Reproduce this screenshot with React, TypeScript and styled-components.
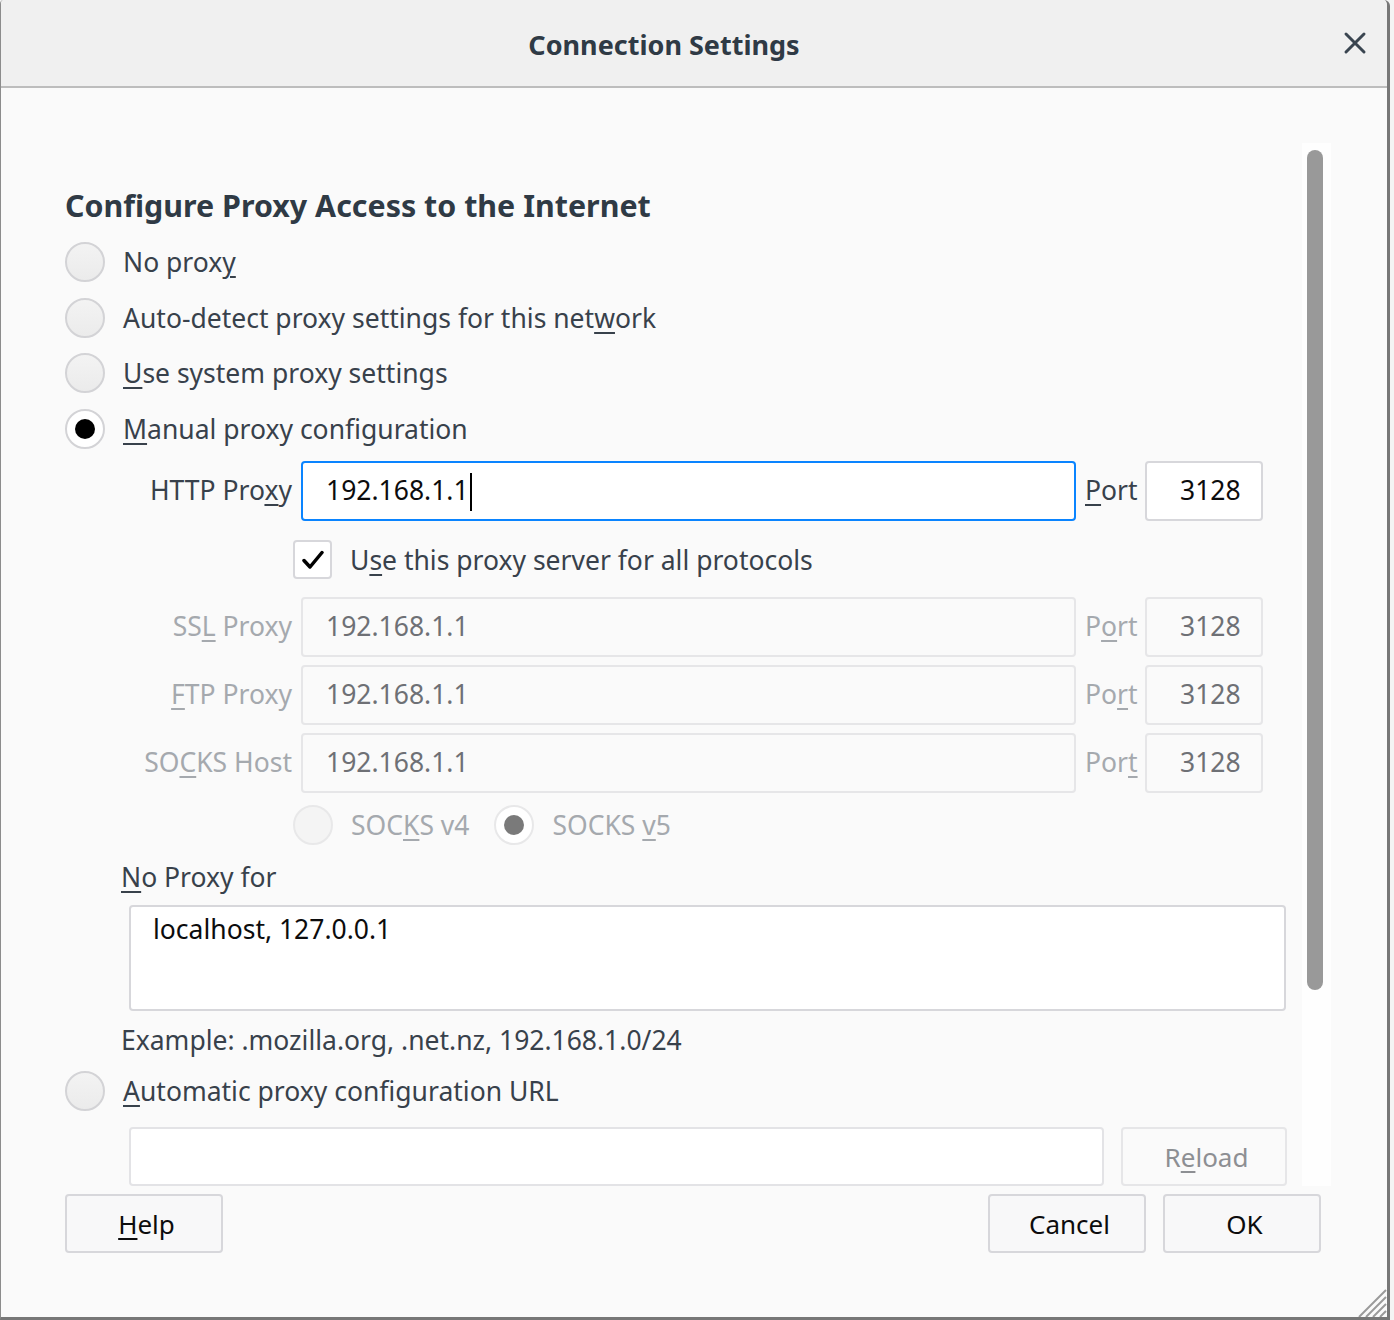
import React from "react";
import styled, { createGlobalStyle, css } from "styled-components";

const Global = createGlobalStyle`
  html, body { margin: 0; padding: 0; background: #f4f4f4; }
  body { font-family: "Noto Sans", "Open Sans", sans-serif; }
  * { box-sizing: border-box; }
`;

const TEXT = "#38414b";
const DIS = "#a5a9ae";
const FS = 26.5;

const Window = styled.div`
  position: relative;
  width: 1390px;
  height: 1320px;
  background: #fafafa;
  border-left: 1px solid #8c8c8c;
  border-right: 3px solid #777;
  border-bottom: 3px solid #777;
  border-top-right-radius: 6px;
  border-top-left-radius: 4px;
  display: flex;
  flex-direction: column;
  overflow: hidden;
`;

const Header = styled.header`
  height: 88px;
  flex: none;
  background: #f0f0f0;
  border-bottom: 2px solid #bdbdbd;
  display: flex;
  align-items: center;
`;

const Title = styled.h1`
  flex: 1;
  margin: 0;
  text-align: center;
  font-size: 27px;
  font-weight: 700;
  color: #2f3a45;
  padding-top: 2px;
`;

const CloseButton = styled.button`
  width: 56px;
  height: 56px;
  margin-right: 4px;
  border: none;
  background: transparent;
  display: flex;
  align-items: center;
  justify-content: center;
  padding: 0;
`;

const ScrollArea = styled.div`
  position: relative;
  height: 1098px;
  flex: none;
  overflow: hidden;
`;

const Content = styled.div`
  padding: 98px 0 0 64px;
  display: flex;
  flex-direction: column;
`;

const Track = styled.div`
  position: absolute;
  left: 1301px;
  top: 55px;
  bottom: 0;
  width: 29px;
  background: #fefefe;
`;

const Thumb = styled.div`
  position: absolute;
  left: 1306px;
  top: 62px;
  width: 16px;
  height: 840px;
  border-radius: 8px;
  background: #999;
`;

const Heading = styled.h2`
  margin: 0;
  font-size: 30.4px;
  line-height: 40px;
  font-weight: 700;
  color: #2f3a45;
`;

const RadioGroup = styled.div`
  margin-top: 16px;
  display: flex;
  flex-direction: column;
  gap: 15.5px;
`;

const RadioRow = styled.label`
  display: flex;
  align-items: center;
  height: 40px;
  gap: 18px;
  font-size: ${FS}px;
  color: ${TEXT};
  white-space: nowrap;
`;

const RadioCircle = styled.span<{ $checked?: boolean; $disabled?: boolean }>`
  width: 40px;
  height: 40px;
  flex: none;
  border-radius: 50%;
  border: 2px solid #d3d3d6;
  background: linear-gradient(#f3f3f3, #ebebeb);
  display: flex;
  align-items: center;
  justify-content: center;
  ${(p) =>
    p.$checked &&
    css`
      background: #fff;
    `}
  ${(p) =>
    p.$disabled &&
    css`
      border-color: #e8e8e9;
      background: ${p.$checked ? "#fff" : "#f4f4f4"};
    `}
  &::after {
    content: "";
    display: ${(p) => (p.$checked ? "block" : "none")};
    width: 20px;
    height: 20px;
    border-radius: 50%;
    background: ${(p) => (p.$disabled ? "#7a7a7a" : "#000")};
  }
`;

const RowLabel = styled.span<{ $disabled?: boolean }>`
  color: ${(p) => (p.$disabled ? DIS : TEXT)};
`;

const ProxyRow = styled.div<{ $top: number }>`
  margin-top: ${(p) => p.$top}px;
  margin-left: 55px;
  display: grid;
  grid-template-columns: 172px 775px 51px 118px;
  column-gap: 9px;
  align-items: center;
  height: 60px;
`;

const ProxyLabel = styled.span<{ $disabled?: boolean; $align?: "left" | "right" }>`
  font-size: ${FS}px;
  text-align: ${(p) => p.$align ?? "right"};
  white-space: nowrap;
  padding-bottom: 3px;
  color: ${(p) => (p.$disabled ? DIS : TEXT)};
`;

const Field = styled.div<{ $focused?: boolean; $disabled?: boolean; $pad?: number }>`
  height: 60px;
  border: 2px solid #d7d7db;
  border-radius: 4px;
  background: #fff;
  padding-left: ${(p) => p.$pad ?? 23}px;
  padding-bottom: 3px;
  display: flex;
  align-items: center;
  font-size: ${FS}px;
  color: #0c0c0d;
  white-space: nowrap;
  ${(p) =>
    p.$focused &&
    css`
      border-color: #0a84ff;
    `}
  ${(p) =>
    p.$disabled &&
    css`
      border-color: #e6e6e8;
      background: #fafafa;
      color: #6e7075;
    `}
`;

const Caret = styled.span`
  display: inline-block;
  width: 2px;
  height: 38px;
  background: #000;
  margin-left: 1px;
  margin-top: 4px;
`;

const CheckRow = styled.label`
  margin-top: 19px;
  margin-left: 228px;
  height: 39px;
  display: flex;
  align-items: center;
  gap: 18px;
  font-size: ${FS}px;
  color: ${TEXT};
`;

const CheckBox = styled.span`
  width: 39px;
  height: 39px;
  flex: none;
  border: 2px solid #d7d7db;
  border-radius: 4px;
  background: #fff;
  display: flex;
  align-items: center;
  justify-content: center;
`;

const ProxyRows = styled.div`
  display: flex;
  flex-direction: column;
  gap: 8px;
  margin-top: 18px;
`;

const SocksRow = styled.div`
  margin-top: 12px;
  margin-left: 228px;
  display: flex;
  gap: 25px;
`;

const PlainLabel = styled.div<{ $top: number }>`
  margin-top: ${(p) => p.$top}px;
  margin-left: 56px;
  font-size: ${FS}px;
  line-height: 36px;
  color: ${TEXT};
`;

const TextArea = styled.div`
  margin-top: 10px;
  margin-left: 64px;
  width: 1157px;
  height: 106px;
  border: 2px solid #d7d7db;
  border-radius: 4px;
  background: #fff;
  padding: 4px 22px;
  font-size: ${FS}px;
  line-height: 36px;
  color: #0c0c0d;
`;

const AutoRow = styled.div`
  margin-top: 13px;
`;

const UrlRow = styled.div`
  margin-top: 16px;
  margin-left: 64px;
  display: flex;
  gap: 17px;
`;

const UrlField = styled(Field)`
  width: 975px;
  height: 59px;
  border-color: #e3e3e6;
`;

const Button = styled.button<{ $width?: number; $disabled?: boolean }>`
  width: ${(p) => p.$width ?? 158}px;
  height: 59px;
  border: 2px solid #d7d7db;
  border-radius: 4px;
  background: #f8f8f9;
  font-family: inherit;
  font-size: 26px;
  color: #0c0c0d;
  padding: 1px 0 0 5px;
  ${(p) =>
    p.$disabled &&
    css`
      border-color: #e6e6e8;
      background: #fafafa;
      color: #8d8f93;
    `}
`;

const Footer = styled.footer`
  flex: 1;
  padding: 8px 66px 0 64px;
  display: flex;
  align-items: flex-start;
`;

const Spacer = styled.div`
  flex: 1;
`;

const FooterGap = styled.div`
  width: 17px;
`;

const Grip = styled.svg`
  position: absolute;
  right: 0;
  bottom: 0;
`;

const U = styled.u`
  text-decoration-thickness: 2px;
  text-underline-offset: 4px;
`;

const Radio = ({
  checked,
  disabled,
  children,
}: {
  checked?: boolean;
  disabled?: boolean;
  children: React.ReactNode;
}) => (
  <RadioRow>
    <RadioCircle $checked={checked} $disabled={disabled} />
    <RowLabel $disabled={disabled}>{children}</RowLabel>
  </RadioRow>
);

const DisabledProxy = ({ label, port }: { label: React.ReactNode; port: React.ReactNode }) => (
  <ProxyRow $top={0}>
    <ProxyLabel $disabled>{label}</ProxyLabel>
    <Field $disabled>192.168.1.1</Field>
    <ProxyLabel $disabled $align="left">
      {port}
    </ProxyLabel>
    <Field $disabled $pad={33}>
      3128
    </Field>
  </ProxyRow>
);

export default function App() {
  return (
    <>
      <Global />
      <Window>
        <Header>
          <Title>Connection Settings</Title>
          <CloseButton aria-label="Close">
            <svg width="24" height="24" viewBox="0 0 24 24">
              <path
                d="M3 3 L21 21 M21 3 L3 21"
                stroke="#3a4550"
                strokeWidth="3"
                strokeLinecap="round"
              />
            </svg>
          </CloseButton>
        </Header>
        <ScrollArea>
          <Content>
            <Heading>Configure Proxy Access to the Internet</Heading>
            <RadioGroup>
              <Radio>
                No prox<U>y</U>
              </Radio>
              <Radio>
                Auto-detect proxy settings for this net<U>w</U>ork
              </Radio>
              <Radio>
                <U>U</U>se system proxy settings
              </Radio>
              <Radio checked>
                <U>M</U>anual proxy configuration
              </Radio>
            </RadioGroup>

            <ProxyRow $top={12.5}>
              <ProxyLabel>
                HTTP Pro<U>x</U>y
              </ProxyLabel>
              <Field $focused>
                192.168.1.1
                <Caret />
              </Field>
              <ProxyLabel $align="left">
                <U>P</U>ort
              </ProxyLabel>
              <Field $pad={33}>3128</Field>
            </ProxyRow>

            <CheckRow>
              <CheckBox>
                <svg width="22" height="20" viewBox="0 0 22 20">
                  <path
                    d="M2 10.5 L8 17 L20 2.5"
                    fill="none"
                    stroke="#000"
                    strokeWidth="3.5"
                    strokeLinecap="round"
                    strokeLinejoin="round"
                  />
                </svg>
              </CheckBox>
              <span>
                U<U>s</U>e this proxy server for all protocols
              </span>
            </CheckRow>

            <ProxyRows>
              <DisabledProxy
                label={
                  <>
                    SS<U>L</U> Proxy
                  </>
                }
                port={
                  <>
                    P<U>o</U>rt
                  </>
                }
              />
              <DisabledProxy
                label={
                  <>
                    <U>F</U>TP Proxy
                  </>
                }
                port={
                  <>
                    Po<U>r</U>t
                  </>
                }
              />
              <DisabledProxy
                label={
                  <>
                    SO<U>C</U>KS Host
                  </>
                }
                port={
                  <>
                    Por<U>t</U>
                  </>
                }
              />
            </ProxyRows>

            <SocksRow>
              <Radio disabled>
                SOC<U>K</U>S v4
              </Radio>
              <Radio disabled checked>
                SOCKS <U>v</U>5
              </Radio>
            </SocksRow>

            <PlainLabel $top={14}>
              <U>N</U>o Proxy for
            </PlainLabel>
            <TextArea>localhost, 127.0.0.1</TextArea>
            <PlainLabel $top={11}>Example: .mozilla.org, .net.nz, 192.168.1.0/24</PlainLabel>

            <AutoRow>
              <Radio>
                <U>A</U>utomatic proxy configuration URL
              </Radio>
            </AutoRow>

            <UrlRow>
              <UrlField />
              <Button $width={166} $disabled>
                R<U>e</U>load
              </Button>
            </UrlRow>
          </Content>
          <Track />
          <Thumb />
        </ScrollArea>
        <Footer>
          <Button>
            <U>H</U>elp
          </Button>
          <Spacer />
          <Button>Cancel</Button>
          <FooterGap />
          <Button>OK</Button>
        </Footer>
        <Grip width="32" height="30" viewBox="0 0 32 30">
          <path
            d="M31 3 L4 30 M31 10 L11 30 M31 17 L18 30 M31 24 L25 30"
            stroke="#9a9a9a"
            strokeWidth="2"
          />
        </Grip>
      </Window>
    </>
  );
}
